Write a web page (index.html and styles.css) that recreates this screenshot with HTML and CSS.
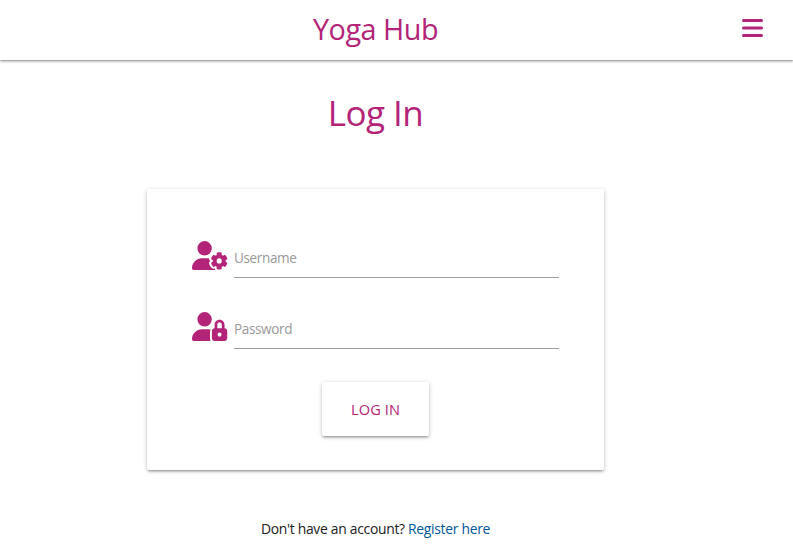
FILE: index.html
```html
<!DOCTYPE html>
<html lang="en">
<head>
<meta charset="utf-8">
<title>Yoga Hub</title>
<link rel="stylesheet" href="styles.css">
</head>
<body>
<header class="nav">
  <a class="brand">Yoga Hub</a>
  <svg class="menu" viewBox="0 0 21 20"><path d="M1.5 2.5h18M1.5 10h18M1.5 17.5h18"/></svg>
</header>
<main class="page">
  <h1>Log In</h1>
  <form class="card">
    <div class="field">
      <svg class="icon" viewBox="0 0 640 512">
        <path d="M224 0a128 128 0 1 1 0 256A128 128 0 1 1 224 0zM178.3 304h91.4c11.8 0 23.4 1.2 34.5 3.3c-2.1 18.5 7.4 35.6 21.8 44.8c-16.6 10.6-26.7 31.6-20 53.3c4 12.9 9.4 25.5 16.4 37.6s15.2 23.1 24.4 33c15.7 16.9 39.6 18.4 57.2 8.7v.9c0 9.2 2.7 18.5 7.9 26.3H29.7C13.3 512 0 498.7 0 482.3C0 383.8 79.8 304 178.3 304z"/>
        <defs><path id="half-gear" d="M-2-152H0c11.2 0 22.2 1.3 32.7 3.7c6.8 1.5 11.3 7.8 11.3 14.8v17.7c0 7.8 4.8 14.8 11.6 18.7c6.8 3.9 15.1 4.5 21.8 .6l13.8-7.9c6.1-3.5 13.7-2.7 18.5 2.4c7.6 8.1 14.3 17.2 20.1 27.2s10.3 20.4 13.5 31c2.1 6.7-1.1 13.7-7.2 17.2l-14.4 8.3c-6.5 3.7-10 10.9-10 18.4s3.5 14.7 10 18.4l14.4 8.3c6.1 3.5 9.2 10.5 7.2 17.2c-3.3 10.6-7.8 21-13.5 31s-12.5 19.1-20.1 27.2c-4.8 5.1-12.5 5.9-18.5 2.4l-13.8-7.9c-6.7-3.9-15.1-3.3-21.8 .6c-6.8 3.9-11.6 10.9-11.6 18.7v17.7c0 7-4.5 13.3-11.3 14.8c-10.5 2.4-21.5 3.7-32.7 3.7H-2z"/></defs>
        <g transform="translate(484 352)"><use href="#half-gear"/><use href="#half-gear" transform="scale(-1 1)"/><circle class="hole" r="46"/></g>
      </svg>
      <input type="text" placeholder="Username">
    </div>
    <div class="field">
      <svg class="icon" viewBox="0 0 640 512"><path d="M224 256A128 128 0 1 0 224 0a128 128 0 1 0 0 256zm-45.7 48C79.8 304 0 383.8 0 482.3C0 498.7 13.3 512 29.7 512H328.6c-5.4-9.4-8.6-20.3-8.6-32V352c0-17 5-31 13-40c-20-6-41-8-63.3-8H178.3zM490 182c22 0 40 18 40 40v66h-80V222c0-22 18-40 40-40zm-88 40v66c-26 0-48 21-48 48V464c0 27 21 48 48 48H578c27 0 48-21 48-48V336c0-27-22-48-48-48V222c0-49-39-88-88-88s-88 39-88 88zm88 214a36 36 0 1 1 0-72 36 36 0 1 1 0 72z"/></svg>
      <input type="password" placeholder="Password">
    </div>
    <button type="button">LOG IN</button>
  </form>
  <p class="signup">Don't have an account? <a>Register here</a></p>
</main>
</body>
</html>
```
FILE: styles.css
```css
* { box-sizing: border-box; }
body {
  margin: 0;
  background: #fff;
  color: #212121;
  font-family: "Segoe UI", "Open Sans", "Noto Sans", sans-serif;
  overflow: hidden;
}
.nav {
  display: grid;
  grid-template-columns: 751px 1fr;
  height: 60px;
  box-shadow: 0 2px 2px rgba(0,0,0,.14), 0 1px 3px rgba(0,0,0,.2), 0 1px 0 rgba(0,0,0,.12);
  color: #b32478;
}
.brand {
  text-align: center;
  font-size: 28.8px;
  line-height: 58px;
  letter-spacing: -.5px;
}
.menu {
  width: 21px;
  height: 20px;
  margin: 18px 0 0 -9px;
  fill: none;
  stroke: #b32478;
  stroke-width: 3;
  stroke-linecap: round;
}
.page {
  display: flex;
  flex-direction: column;
  align-items: center;
  width: 751px;
}
h1 {
  margin: 33px 0 56px;
  font-size: 35px;
  line-height: 40px;
  font-weight: 400;
  letter-spacing: -.5px;
  color: #b32478;
}
.card {
  display: flex;
  flex-direction: column;
  align-items: center;
  width: 457px;
  height: 281px;
  padding: 49px 45px 0;
  border-radius: 2px;
  background: #fff;
}
.card, button {
  box-shadow: 0 2px 2px 0 rgba(0,0,0,.14), 0 3px 1px -2px rgba(0,0,0,.12), 0 1px 5px 0 rgba(0,0,0,.2);
}
.field {
  display: flex;
  gap: 6px;
  width: 100%;
  height: 40px;
  margin-bottom: 31px;
}
.icon {
  width: 36px;
  height: 29px;
  margin-top: 3px;
  fill: #b32478;
}
.hole { fill: #fff; }
input {
  flex: 1;
  min-width: 0;
  height: 40px;
  padding: 0;
  border: 0;
  border-bottom: 1px solid #9e9e9e;
  outline: 0;
  background: transparent;
  font: 13.6px "Segoe UI", "Open Sans", "Noto Sans", sans-serif;
  letter-spacing: -.4px;
}
input::placeholder { color: #999; opacity: 1; }
button {
  width: 107px;
  height: 54px;
  margin-top: 2px;
  padding: 0;
  border: 0;
  border-radius: 2px;
  background: #fff;
  color: #b32478;
  font: 14.6px "Segoe UI", "Open Sans", "Noto Sans", sans-serif;
  letter-spacing: .1px;
}
.signup {
  margin: 49px 0 0;
  font-size: 13.9px;
  line-height: 20px;
  letter-spacing: -.3px;
  white-space: nowrap;
}
.signup a { color: #01579b; }
```
